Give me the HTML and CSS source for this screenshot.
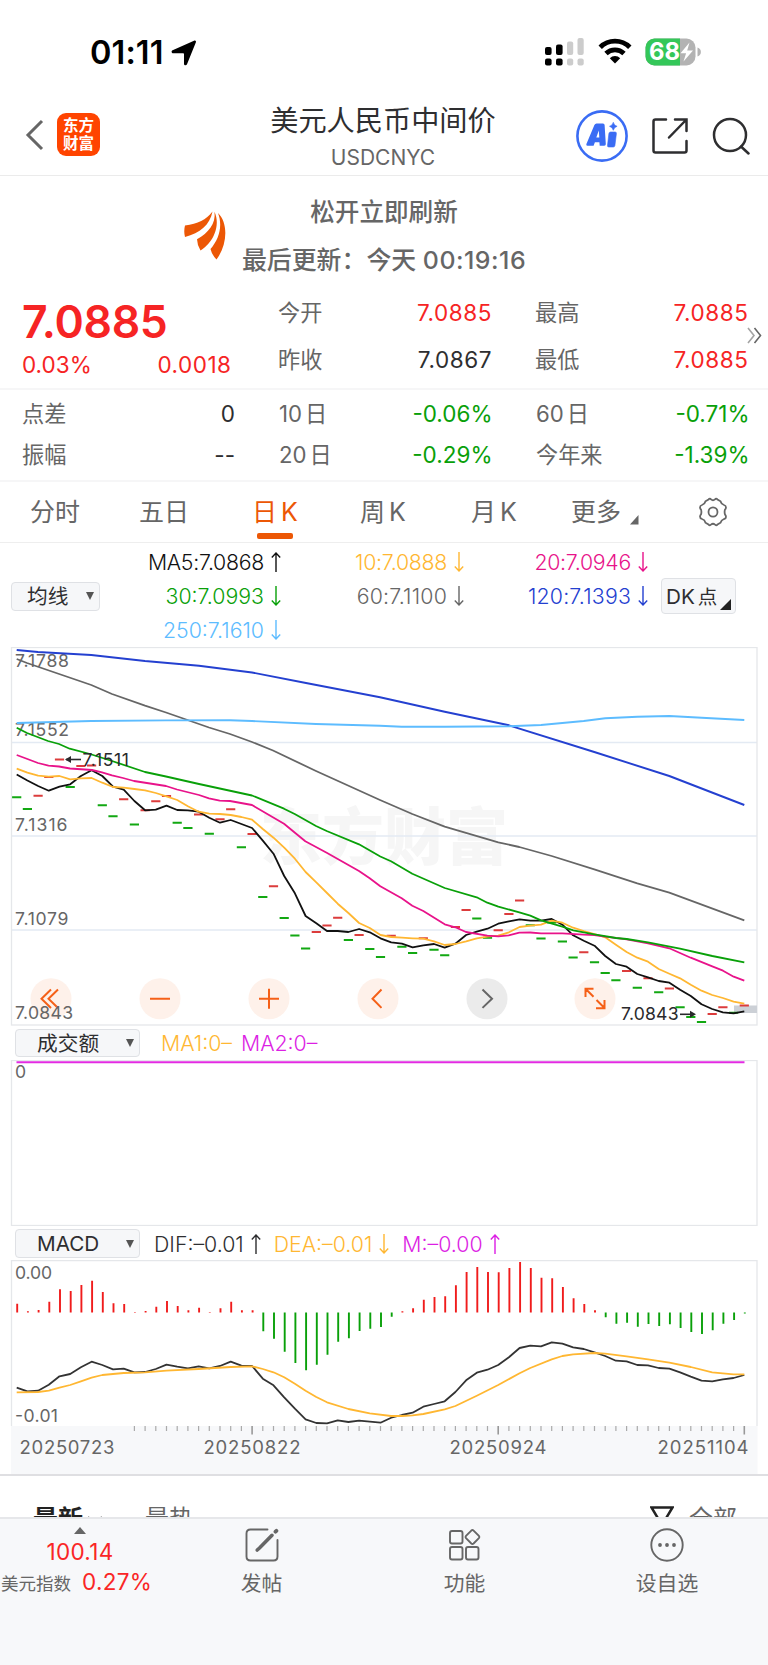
FILE: index.html
```html
<!DOCTYPE html>
<html lang="zh-CN">
<head>
<meta charset="utf-8">
<title>美元人民币中间价 USDCNYC</title>
<link rel="stylesheet" href="styles.css">
</head>
<body>
<div class="status">
  <span class="clock">01:11</span>
  <svg class="locate" width="26" height="26" viewBox="0 0 26 26"><path d="M23 .8c1.500-.6 2.400.4 1.800 1.800L16 24.300c-.7 1.600-3 1.200-3-.6V14c0-.5-.3-.8-.8-.8H2.300C.4 13.200 0 10.900 1.600 10.200z"/></svg>
  <svg class="signal" width="39" height="28" viewBox="0 0 39 28">
    <g><rect x="0" y="9" width="6.600" height="8" rx="2"/><rect x="11" y="6.500" width="6.600" height="10.500" rx="2"/><rect x="0" y="20.500" width="6.600" height="7" rx="2"/><rect x="11" y="20.500" width="6.600" height="7" rx="2"/></g>
    <g class="dim"><rect x="22" y="3.500" width="6.200" height="13.500" rx="2"/><rect x="32.500" y="0" width="6.200" height="17" rx="2"/><rect x="22" y="20.500" width="6.200" height="7" rx="2"/><rect x="32.500" y="20.500" width="6.200" height="7" rx="2"/></g>
  </svg>
  <svg class="wifi" width="34" height="26" viewBox="0 0 34 26"><path d="M2.200 9.200a21 21 0 0 1 29.600 0M8 15.400a13 13 0 0 1 18 0" fill="none" stroke="#000" stroke-width="4.800"/><path d="M17 25.500l-5.200-5.300a7.500 7.500 0 0 1 10.400 0z"/></svg>
  <svg class="battery" width="57" height="28" viewBox="0 0 57 28">
    <rect x=".5" y=".5" width="50" height="27" rx="9" fill="#b3b3b3"/>
    <path d="M9.500.5H35v27H9.500a9 9 0 0 1-9-9v-9a9 9 0 0 1 9-9z" fill="#34c759"/>
    <path d="M52.500 9.500c4.500 1 4.500 8 0 9z" fill="#b3b3b3"/>
    <path d="M44.500 4.500L35.500 15.200h5.600L38.500 23.500l9.500-11h-5.800z" fill="#fff"/>
    <text x="4" y="22.300" textLength="31" lengthAdjust="spacingAndGlyphs">68</text>
  </svg>
</div>

<header class="head">
  <div class="head-left">
    <svg class="back" width="20" height="32" viewBox="0 0 20 32"><path d="M17 2L3 16l14 14"/></svg>
    <div class="logo"><span>东方</span><span>财富</span></div>
  </div>
  <div class="titles"><h1>美元人民币中间价</h1><p>USDCNYC</p></div>
  <div class="head-right">
    <svg width="52" height="52" viewBox="0 0 52 52"><circle cx="26" cy="26" r="24.600" fill="none" stroke="#3a6cf4" stroke-width="2.600"/>
      <path fill="#3a6cf4" fill-rule="evenodd" d="M20.500 13.500h6.500q1.500 0 1.600 1.500l1.200 19q.1 1.700-1.600 1.700h-4.500l-.3-3.500h-4.500l-1.300 3.500h-6.200q-1.600 0-1-1.600l8-19q.7-1.600 2.100-1.600zM22.800 20.500L20.300 27.500h3z"/>
      <path fill="#3a6cf4" d="M34.500 22h4.600q1.500 0 1.300 1.600l-1.500 12q-.2 1.400-1.600 1.400h-4.500q-1.500 0-1.300-1.500l1.400-12q.2-1.500 1.600-1.500zM37.300 12.300q.8 3.400 3.800 4-3 .8-3.800 4-.8-3.200-3.800-4 3-.6 3.800-4z" stroke="#3a6cf4" stroke-width=".6"/></svg>
    <svg class="line" width="38" height="38" viewBox="0 0 38 38"><path d="M15 2.500H4.500q-2 0-2 2v29q0 2 2 2h29q2 0 2-2V24M24 2.500h11.500V14M35 3L18 20.500"/></svg>
    <svg class="line" width="38" height="38" viewBox="0 0 38 38"><circle cx="18" cy="18" r="16"/><path d="M29 29.500l7.500 7"/></svg>
  </div>
</header>

<section class="refresh">
  <svg width="44" height="50" viewBox="0 0 44 50"><path d="M28.500.5C22 9 14 12.500 1 14.500Q-.5 20 1 26C16 22 26 14 28.500.5z"/><path d="M30.500.8c1.500 12-6 21-17.500 27.500q.2 6 3.500 11.200C29 32 37 15 30.500.8z"/><path d="M34 2c5 13 1 26-7.500 36q1.500 6 6 10.500C43.500 34 44.500 12 34 2z"/></svg>
  <div class="refresh-text"><p>松开立即刷新</p><p class="upd">最后更新：今天 <span>00:19:16</span></p></div>
</section>

<section class="quote">
  <div class="price"><b>7.0885</b><div><span>0.03%</span><span>0.0018</span></div></div>
  <dl><dt>今开</dt><dd class="up">7.0885</dd><dt>昨收</dt><dd>7.0867</dd></dl>
  <dl><dt>最高</dt><dd class="up">7.0885</dd><dt>最低</dt><dd class="up">7.0885</dd></dl>
  <svg class="more" width="15" height="17" viewBox="0 0 15 17"><path d="M1 1l6 7.500L1 16" opacity=".6"/><path d="M7.500 1l6 7.500-6 7.500"/></svg>
</section>

<section class="stats">
  <dl><dt>点差</dt><dd>0</dd><dt>振幅</dt><dd>--</dd></dl>
  <dl><dt>10<i>日</i></dt><dd class="down">-0.06%</dd><dt>20<i>日</i></dt><dd class="down">-0.29%</dd></dl>
  <dl><dt>60<i>日</i></dt><dd class="down">-0.71%</dd><dt>今年来</dt><dd class="down">-1.39%</dd></dl>
</section>

<nav class="tabs">
  <a>分时</a><a>五日</a><a class="on">日<i>K</i></a><a>周<i>K</i></a><a>月<i>K</i></a>
  <a class="drop">更多<svg width="9" height="10" viewBox="0 0 9 10"><path d="M8.500 0v9.500H0z"/></svg></a>
  <svg class="gear" width="30" height="30" viewBox="0 0 30 30"><path d="M10.500 2.500Q12 1 13 2.400q2 1.600 4 0Q18 1 19.500 2.500l3 1.800q.7 2.900 3.500 3.700 2 .5 2 2.500-.2 1.600-1 2-.8 2.500 0 5 1 1 1 2.500 0 1.600-2 2-2.800 1-3.500 3.700l-3 1.800Q18 29 17 27.600q-2-1.600-4 0-1 1.400-2.500-.1l-3-1.800Q6.800 22.800 4 22q-2-.5-2-2.500.2-1.600 1-2 .8-2.500 0-5-1-.8-1-2Q2 8.500 4 8q2.800-.8 3.500-3.700z"/><ellipse cx="15" cy="15" rx="4.500" ry="4.700"/></svg>
</nav>

<section class="legend">
  <span class="pick ma"><em>均线</em><svg width="8" height="8" viewBox="0 0 8 8"><path d="M0 0h8L4 8z"/></svg></span>
  <div class="avgs">
    <span class="k tight">MA5:7.0868<svg class="arr" viewBox="0 0 10 20"><path d="M5 20V1M.8 5.500L5 1l4.200 4.500"/></svg></span>
    <span class="y tight">10:7.0888<svg class="arr" viewBox="0 0 10 20"><path d="M5 0v19M.8 14.500L5 19l4.200-4.500"/></svg></span>
    <span class="m tight">20:7.0946<svg class="arr" viewBox="0 0 10 20"><path d="M5 0v19M.8 14.500L5 19l4.200-4.500"/></svg></span>
    <span class="g">30:7.0993<svg class="arr" viewBox="0 0 10 20"><path d="M5 0v19M.8 14.500L5 19l4.200-4.500"/></svg></span>
    <span class="s loose">60:7.1100<svg class="arr" viewBox="0 0 10 20"><path d="M5 0v19M.8 14.500L5 19l4.200-4.500"/></svg></span>
    <span class="b loose">120:7.1393<svg class="arr" viewBox="0 0 10 20"><path d="M5 0v19M.8 14.500L5 19l4.200-4.500"/></svg></span>
    <span class="c">250:7.1610<svg class="arr" viewBox="0 0 10 20"><path d="M5 0v19M.8 14.500L5 19l4.200-4.500"/></svg></span>
  </div>
  <span class="pick dk"><em>DK<i>点</i></em><svg width="11" height="11" viewBox="0 0 11 11"><path d="M11 0v11H0z"/></svg></span>
</section>

<svg class="chart" width="768" height="379" viewBox="0 647 768 379">
  <text class="mark" x="260" y="860" textLength="248" lengthAdjust="spacingAndGlyphs">东方财富</text>
  <path class="grid" d="M11.500 742.500H757M11.500 836H757M11.500 930H757"/>
  <rect class="frame" x="11.500" y="647.500" width="745.500" height="377.500"/>
  <rect x="734" y="1005.500" width="23" height="7.500" fill="#ccd0d6"/>
  <g class="disc"><circle cx="51" cy="998.700" r="20.500"/><circle cx="160" cy="998.700" r="20.500"/><circle cx="269" cy="998.700" r="20.500"/><circle cx="378" cy="998.700" r="20.500"/><circle class="off" cx="487" cy="998.700" r="20.500"/><circle cx="595" cy="998.700" r="20.500"/></g>
  <g class="ctl"><path d="M51 989.500l-9.500 9.200L51 1008M58 989.500l-9.500 9.200L58 1008M150 998.700h20M259 998.700h20M269 988.700v20M381.500 989.500l-9 9.200 9 9.200M585.500 997v-8.200h8M586 989.300l7.500 7.500M604.500 1000v8.200h-8.500M604.500 1008l-8-8"/><path class="next" d="M482.500 989.500l9.500 9.200-9.500 9.200"/></g>
  <g class="axis">
    <text x="15" y="667" textLength="54">7.1788</text><text x="15" y="736" textLength="54">7.1552</text>
    <text x="15" y="831" textLength="52.500">7.1316</text><text x="15" y="925" textLength="53.500">7.1079</text>
    <text x="15" y="1018.700" textLength="58">7.0843</text>
  </g>
  <g id="price"></g>
  <g class="peak"><path d="M81 759.500H66"/><path class="tip" d="M65 759.500l6-3.500v7z"/><text x="82.500" y="765.700" textLength="46.500">7.1511</text>
    <path d="M680 1014.300h14"/><path class="tip" d="M696 1014.300l-6-3.500v7z"/><text x="621" y="1020" textLength="57.500">7.0843</text></g>
</svg>

<div class="bar">
  <span class="pick"><em>成交额</em><svg width="8" height="8" viewBox="0 0 8 8"><path d="M0 0h8L4 8z"/></svg></span>
  <span class="y v1">MA1:0–</span><span class="p">MA2:0–</span>
</div>
<svg class="chart" width="768" height="166" viewBox="0 1060 768 166">
  <rect class="frame" x="11.500" y="1060.500" width="745.500" height="165"/>
  <path d="M16.500 1062.300H744.500" stroke="#e32be3" stroke-width="2"/>
  <g class="axis"><text x="15" y="1077.700">0</text></g>
</svg>

<div class="bar macd">
  <span class="pick"><em>MACD</em><svg width="8" height="8" viewBox="0 0 8 8"><path d="M0 0h8L4 8z"/></svg></span>
  <span class="d">DIF:–0.01<svg class="arr" viewBox="0 0 10 20"><path d="M5 20V1M.8 5.500L5 1l4.200 4.500"/></svg></span>
  <span class="y">DEA:–0.01<svg class="arr" viewBox="0 0 10 20"><path d="M5 0v19M.8 14.500L5 19l4.200-4.500"/></svg></span>
  <span class="p">M:–0.00<svg class="arr" viewBox="0 0 10 20"><path d="M5 20V1M.8 5.500L5 1l4.200 4.500"/></svg></span>
</div>
<svg class="chart" width="768" height="214" viewBox="0 1260 768 214">
  <path class="frame" d="M11.500 1426V1260.500H757V1426"/>
  <rect x="11" y="1426" width="746.500" height="48" fill="#f7f8fa"/>
  <g class="axis"><text x="15" y="1278.500" textLength="37">0.00</text><text x="15" y="1421.500" textLength="43">-0.01</text></g>
  <g id="macd"></g>
  <g class="dates"><text x="19.500" y="1453.700" textLength="95">20250723</text><text x="203.500" y="1453.700" textLength="97">20250822</text><text x="449.500" y="1453.700" textLength="97">20250924</text><text x="657.500" y="1453.700" textLength="91">20251104</text></g>
</svg>

<div class="feed">
  <b>最新</b><svg class="chev" width="16" height="8" viewBox="0 0 16 8"><path d="M1 1l7 6 7-6"/></svg><span class="hot">最热</span>
  <svg class="filter" width="24" height="24" viewBox="0 0 24 24"><path d="M1.500 1.500h21L15 14v8l-6-3v-5z"/></svg><span>全部</span>
</div>

<footer class="foot">
  <div class="index"><svg width="12" height="7" viewBox="0 0 12 7"><path d="M0 7L6 0l6 7z"/></svg><b>100.14</b><p><span>美元指数</span><b>0.27%</b></p></div>
  <div class="act"><svg width="34" height="34" viewBox="0 0 34 34"><path d="M22.500 1.500H5.500q-4 0-4 4v23q0 4 4 4h23q4 0 4-4V12"/><path d="M27 7.300L14.500 20l-2.300 2" stroke-width="3.600"/><path d="M30.500 3.700l.9-.9" stroke-width="3.800"/></svg><span>发帖</span></div>
  <div class="act"><svg width="34" height="34" viewBox="0 0 34 34"><rect x="2" y="3" width="12.500" height="12.500" rx="2"/><rect x="2" y="19" width="12.500" height="12.500" rx="2"/><rect x="18" y="19" width="12.500" height="12.500" rx="2"/><path d="M23.300 2.600q1.200-1 2.300 0l5.300 5.300q1 1.200 0 2.300l-5.300 5.300q-1.200 1-2.300 0L18 10.200q-1-1.200 0-2.300z"/></svg><span>功能</span></div>
  <div class="act"><svg width="34" height="34" viewBox="0 0 34 34"><circle cx="17" cy="17" r="15.700"/><path d="M10 17h0M17 17h0M24 17h0" stroke-width="3.800"/></svg><span>设自选</span></div>
</footer>
<script src="chart.js"></script>
</body>
</html>
```
FILE: styles.css
```css
* { box-sizing: border-box; margin: 0; padding: 0; }
body { width: 768px; height: 1665px; overflow: hidden; background: #fff; color: #2e2e30; font-family: Inter, "Noto Sans CJK SC", sans-serif; }
i, em { font-style: normal; }
svg { display: block; flex: none; }

.status { height: 95px; display: flex; align-items: flex-start; padding: 38px 0 0 90px; }
.clock { font-weight: 600; font-size: 32.500px; line-height: 29px; width: 81px; letter-spacing: .1px; color: #000; }
.locate { margin-top: 2px; }
.signal { margin: 0 14px 0 348px; }
.signal .dim { fill: #ccc; }
.battery { margin-left: 13px; }
.battery text { font: 700 24px Inter; fill: #fff; }

.head { height: 81px; display: grid; grid-template-columns: 220px 1fr 220px; border-bottom: 1.500px solid #ebebeb; }
.head-left { display: flex; align-items: flex-start; padding: 18px 0 0 25px; }
.back { margin: 6px 12px 0 0; fill: none; stroke: #666; stroke-width: 3; }
.logo { width: 43px; height: 43px; border-radius: 9px; background: #ff4400; color: #fff; font-weight: 700; font-size: 15.500px; line-height: 17.500px; display: flex; flex-direction: column; align-items: center; padding-top: 4px; }
.titles { text-align: center; padding: 7px 2px 0 0; }
h1 { font-weight: 400; font-size: 28.200px; line-height: 38px; }
.titles p { font-size: 21px; line-height: 26px; padding-top: 5px; color: #666; }
.head-right { display: flex; align-items: center; gap: 23px; padding: 0 0 0 28px; }
.head-right svg { margin-top: 1px; }
.line { fill: none; stroke: #2e2e30; stroke-width: 2.500; stroke-linecap: round; }

.refresh { height: 114px; display: flex; padding: 20px 0 0 184px; color: #666; font-weight: 500; }
.refresh > svg { fill: #ec5705; margin-top: 15px; }
.refresh-text { width: 312px; text-align: center; font-size: 24.600px; line-height: 32px; }
.refresh-text .upd { margin-top: 16px; white-space: nowrap; font-size: 24.900px; }
.upd span { letter-spacing: .5px; }

.quote { height: 100px; display: grid; grid-template-columns: 278px 257px 213px 20px; border-bottom: 2px solid #f6f6f7; }
.price { padding: 6px 0 0 22px; color: #f62424; }
.price b { display: block; font-weight: 600; font-size: 44.500px; line-height: 52px; letter-spacing: -.3px; }
.price div { display: flex; justify-content: space-between; width: 209px; font-size: 22.500px; line-height: 30px; margin-top: 2px; }
.price div span:last-child { letter-spacing: .5px; margin-right: -.5px; }
dl { display: grid; grid-template-columns: auto 1fr; }
dt { font-size: 22.200px; color: #666; }
dt i { margin-left: 3px; }
dd { font-size: 22.500px; text-align: right; }
.quote dd { letter-spacing: .6px; margin-right: -.6px; }
.quote dl { grid-template-rows: 46.500px 46.500px; line-height: 46px; }
.quote dl:nth-child(2), .stats dl:nth-child(2) { padding-right: 43.500px; }
.up { color: #f62424; }
.down { color: #09a009; }
.more { fill: none; stroke: #666; stroke-width: 1.600; margin: 37px 0 0 -1px; }
.stats { height: 92px; display: grid; grid-template-columns: 257px 257px 213.500px; padding: 4px 0 0 22px; border-bottom: 2px solid #f6f6f7; }
.stats dl { grid-template-rows: 41px 41px; line-height: 40px; }
.stats dl:first-child { padding-right: 44px; }

.tabs { height: 61px; display: grid; grid-template-columns: 109px 113px 108px 111px 101px 152px 1fr; padding-left: 30px; border-bottom: 1px solid #eee; color: #666; font-size: 25px; line-height: 60px; }
.tabs a i { margin-left: 4px; }
.tabs .on { color: #ec5705; display: block; }
.tabs .on::after { content: ""; display: block; width: 36px; height: 5.500px; border-radius: 2px; background: #ec5705; margin: -9px 0 0 5px; }
.drop { display: flex; align-items: center; gap: 9px; margin-left: -1px; }
.drop svg { fill: #666; margin-top: 16px; }
.gear { fill: none; stroke: #666; stroke-width: 1.800; margin: 15px 0 0 -26px; }

.legend { height: 104px; display: flex; align-items: flex-start; padding-left: 11px; }
.pick { display: flex; align-items: center; justify-content: space-between; height: 28.500px; background: #f6f7f9; border: 1.500px solid #dfe1e5; border-radius: 4px; color: #2e2e30; }
.pick em { font-size: 20.700px; margin-top: -2px; }
.pick svg { fill: #555; }
.pick.ma { width: 89px; margin-top: 39px; padding: 0 5px 0 15px; }
.pick.dk { width: 75px; height: 36px; margin: 35px 0 0 13px; padding: 0 4px; position: relative; }
.dk em i { margin-left: 3px; font-size: 19.500px; }
.dk svg { position: absolute; right: 4px; bottom: 3px; fill: #222; }
.avgs { width: 548px; display: grid; grid-template-columns: 181px 183px 184px; grid-template-rows: 34px 34px 34px; padding-top: 2px; }
.avgs span, .bar > span { display: flex; justify-content: flex-end; align-items: center; font-size: 21.300px; font-weight: 300; white-space: nowrap; }
.avgs .tight { letter-spacing: -.28px; }
.avgs .loose { letter-spacing: .2px; }
.arr { width: 10px; height: 20px; margin-left: 7px; fill: none; stroke: currentColor; stroke-width: 1.400; }
.k { color: #111; } .y { color: #ffb732; } .m { color: #e8138a; } .g { color: #09a009; } .s { color: #666; } .b { color: #2440d0; } .c { color: #5dbcff; } .p { color: #dc1fe4; }

.chart .frame { fill: none; stroke: #e5e7ea; stroke-width: 1.300; }
.chart .grid { stroke: #e3eaf3; stroke-width: 1.300; }
.axis text { font: 400 17.600px Inter; fill: #666; }
.dates text { font: 400 18.500px Inter; fill: #666; }
.mark { font: 900 62px "Noto Sans CJK SC"; fill: #f6f6f6; }
.peak { fill: none; stroke: #2a2a2c; stroke-width: 1.600; }
.peak text { font: 400 17.600px Inter; fill: #2a2a2c; stroke: none; }
.peak .tip { fill: #2a2a2c; stroke: none; }
.disc { fill: #fef1ea; }
.disc .off { fill: #ebebeb; }
.ctl { fill: none; stroke: #f56018; stroke-width: 2; }
.ctl .next { stroke: #666; }

.bar { height: 34px; display: flex; align-items: center; padding-left: 15px; }
.bar .pick { width: 125px; padding: 0 5px 0 21px; justify-content: space-between; font-weight: 400; }
.bar.macd { padding-top: 1px; }
.bar.macd em { margin-top: 0; }
.bar .v1 { margin: 0 9px 0 21px; }
.d { margin-left: 14px; }
.macd .y, .macd .p { margin-left: 13px; }

.feed { height: 43px; overflow: hidden; display: flex; align-items: flex-start; border-top: 2px solid #dfdfe2; padding: 31px 0 0 33px; line-height: 24px; font-size: 24px; color: #666; }
.feed b { color: #222; font-size: 25px; font-weight: 700; }
.chev { margin: 9px 0 0 4px; fill: none; stroke: #666; stroke-width: 2; }
.hot { margin-left: 42px; width: 505px; }
.filter { fill: none; stroke: #222; stroke-width: 2.500; margin: -1px 15px 0 0; }
.foot { height: 149px; background: #f7f8fa; border-top: 2px solid #e6e7ea; display: grid; grid-template-columns: 160px 203px 203px 202px; color: #666; }
.index { padding-top: 8px; display: flex; flex-direction: column; align-items: center; }
.index svg { fill: #666; }
.index b { font-weight: 400; font-size: 22.500px; letter-spacing: .3px; line-height: 26px; color: #fa2626; margin-top: 5px; }
.index p { display: flex; align-items: center; width: 160px; padding-left: 1px; font-size: 17.500px; white-space: nowrap; margin-top: 1px; }
.index p b { margin: 0 0 0 11px; line-height: 32px; }
.act { padding-top: 9px; display: flex; flex-direction: column; align-items: center; font-size: 20.800px; line-height: 30px; }
.act svg { fill: none; stroke: #666; stroke-width: 1.900; stroke-linecap: round; margin-bottom: 7px; }
```
FILE: chart.js
```js
const STEP = 10.7, LEFT = 16.7;
const x = i => LEFT + i * STEP;
const NS = 'http://www.w3.org/2000/svg';

function draw(host, d, stroke, width) {
  const p = document.createElementNS(NS, 'path');
  p.setAttribute('d', d);
  p.setAttribute('fill', 'none');
  p.setAttribute('stroke', stroke);
  p.setAttribute('stroke-width', width);
  p.setAttribute('stroke-linejoin', 'round');
  host.appendChild(p);
}
const dense = ys => 'M' + ys.map((y, i) => x(i).toFixed(1) + ' ' + y).join('L');

const price = document.getElementById('price');
const ticks = 'g797.3 g809 r795.7 r777 r759.5 g787 r766 r765.5 g805.3 g816.3 r799.3 g824.5 r810.3 r801.3 r796 g822.7 g828 r814.5 g833.7 r819.3 r809.3 g847.3 r834 g897 r886.3 g918 g935.6 g948.6 r932 r925.4 r917.7 g940 r935 g949 g957 r935.7 g946.7 g953 r938.3 g949.8 g955.3 r927 r910 g918.6 g937.7 r930.3 r914 r900.6 g925.3 g938.6 g922.5 g941.6 g957.6 r952.3 g962.3 g973 g980.3 r971 g987.7 r978.3 g992.3 r988.6 g1007.3 g1017 g1022 r1014 r1007.3 g1012.7 r1005.6'.split(' ');
for (const [key, color] of [['g', '#12a812'], ['r', '#dc3c3c']]) {
  draw(price, ticks.map((t, i) => t[0] === key ? `M${(x(i) - 4.6).toFixed(1)} ${t.slice(1)}h9.200` : '').join(''), color, 2);
}

draw(price, dense([774.5,780.5,786,790.7,786.7,784.3,776,770.3,776,786.7,789.7,801,810.3,809.7,805.7,810,810.3,811.7,817.7,822.7,820,824,828,840.7,853.7,876,893.3,916,923.3,931,931,932,929,932.3,938.3,942.3,943.7,947.3,945.3,944,947.7,943.7,935,931.7,928.7,923.7,921.3,919.3,920.7,920.7,919,924.7,935.3,940.7,945.7,956,964,966.7,974,977.3,981,982.7,989.7,996,1004.3,1009,1012.3,1013.3,1011.3]), '#111', 1.8);
draw(price, dense([768.7,772.7,775.7,776.7,776,779.3,778.3,778,782.7,787,787.7,789,790.3,793,796.3,800,806.3,811.7,813.7,814,815,817,819.7,829,837.7,847.7,858.7,872,882.3,893,903.7,913,923,928,935,937,937.7,938.3,938.7,941.3,945,944,941.3,938.3,936.7,935.7,932.3,927,925.7,924.7,920.7,922.7,927.7,931,934,937.3,944.7,952,957.7,961.7,969,973.7,978.3,984.7,990.7,995,998,1001.7,1003.7]), '#ffb732', 1.8);
draw(price, 'M16.700 755L27.400 759 38 763 48.500 765.700 59 766.500 70 768.500 92 770 102 772.300 112 775.300 123 778 134 781 166 786 177 789.500 199 795 209 798.300 219.700 800.700 230 801 252 805 284 823.700 305.300 841.300 326.700 852.700 359 871 369.700 878.300 380.300 886.300 401.700 898.300 412.300 905.700 423.300 911 444.700 924.300 455.300 927.300 466 932 487.300 935.700 498.300 936.300 508.700 935.300 519.300 932.700 530.300 932.500 541 933.300 562.300 933.300 583.700 934.700 594.300 935 605.300 936.700 626.700 939.300 648 943.300 669.300 948.300 690.700 957.700 712.300 966.300 723 970.700 733.700 976.700 744.300 980.700', '#e8138a', 1.8);
draw(price, 'M16.700 727.700L27 733 48 741 59 744 69.700 748.700 90 754 112 761 145 772 166 776.500 199 784 252 795.500 284 808.700 294.700 814 316 826 326.700 831 359 844.300 380.300 856.500 391 861.300 412.300 873.700 444.700 888 476.700 897.300 487.300 902.700 498.300 906.700 519.300 912.300 530.300 915.700 541 920.300 562.300 926.700 573.300 930.300 594.300 934.300 616 938 626.700 939 648 942.300 680 948.700 712.300 956 744.300 962.300', '#09a009', 1.8);
draw(price, 'M16.700 659L27 663 91.300 685 112 694 145 705.700 166 712.500 209 727.500 230 734 252 742 273 750.500 316 771 380 800 412.300 814 444.700 826.700 498.300 842.300 519.300 847 551.700 856 594.300 869.300 637.300 883.300 669.300 892.700 744.300 920.300', '#666', 1.8);
draw(price, 'M16.700 650L38 652 91.300 655 145 661 199 665.800 252 672.500 306 683 380 697.300 444.700 711.700 509 725.300 594.300 752 669.300 776 744.300 805', '#2440d0', 1.9);
draw(price, 'M16.700 723L91.300 721 166 720.400 230 720.300 252 721 316 724 380 725.700 401.700 726.700 444.700 726.700 509 726.300 541 725 562.300 723 583.700 721 605.300 718.300 637.300 716.700 669.300 716 701.700 717.700 744.300 720', '#5dbcff', 1.9);

const macd = document.getElementById('macd');
const ZERO = 1312.4;
const ends = [1303.7,1311.3,1310,1301.7,1289.3,1291,1285,1280.7,1292,1303.3,1304,1311.9,1311,1306.7,1301,1306,1310.3,1307.7,1311.9,1308.3,1301.7,1310.3,1310.3,1331.3,1338.7,1351.7,1363,1370.3,1364.7,1354.7,1341.7,1338.3,1331,1328.7,1327,1316.7,1311.3,1308.3,1299.7,1297,1296.3,1285.3,1272,1267,1272,1272.3,1268,1262,1268,1277.7,1278.3,1287,1298.3,1304,1310.3,1317.3,1323.7,1322.7,1326.7,1324,1326,1324.3,1328,1332,1334,1330.3,1323.7,1320,1313.5];
const stem = test => ends.map((y, i) => test(y) ? `M${(x(i) + .5).toFixed(1)} ${ZERO}V${y}` : '').join('');
draw(macd, stem(y => y < ZERO), '#f01c1c', 1.9);
draw(macd, stem(y => y > ZERO), '#09a009', 1.9);
draw(macd, dense([1387.7,1391.3,1390.7,1384.7,1376.3,1374,1367.3,1361.7,1365,1369.3,1368.7,1372.3,1372,1369,1364.7,1366.7,1368.3,1366.3,1368.3,1366,1361.7,1365.7,1366,1378.7,1385.3,1397.3,1408.7,1419.3,1423,1423.3,1420.3,1422,1420.7,1421.7,1422.7,1417.7,1415,1412.7,1406.7,1404,1401.3,1392,1380.3,1372.7,1369.7,1365,1357.3,1348,1345.7,1346.3,1342.3,1343.7,1347.3,1349,1352.3,1356,1360.7,1361.3,1365,1365.3,1368,1368.7,1372.3,1376.7,1380.7,1381.3,1379.3,1378,1375]), '#333', 1.8);
const dea = [[0,1392.3],[2,1392],[3,1390.7],[4,1387.7],[5,1385],[6,1381.3],[7,1377.7],[8,1375],[10,1373],[12,1372.3],[14,1370.7],[17,1369],[20,1367],[22,1366.3],[23,1369],[24,1372.3],[25,1377.3],[26,1383.7],[27,1390.7],[28,1397],[29,1402.3],[31,1409],[33,1413.3],[35,1416],[36,1416],[37,1415.3],[38,1414],[40,1409.3],[41,1406],[43,1395.7],[45,1385],[47,1373.3],[48,1368],[50,1359.3],[51,1356],[52,1354.3],[54,1353],[55,1353.7],[57,1356.3],[59,1359.3],[61,1362.7],[63,1367],[65,1372.3],[67,1374.3],[68,1374.3]];
draw(macd, 'M' + dea.map(([i, y]) => x(i).toFixed(1) + ' ' + y).join('L'), '#ffb732', 1.8);

let minor = '', major = '';
for (let i = 11; i < 69; i++) {
  if (i === 22 || i === 45 || i === 68) major += `M${x(i).toFixed(1)} 1426v8.500`;
  else minor += `M${x(i).toFixed(1)} 1426v5`;
}
draw(macd, minor, '#aaa', 1.2);
draw(macd, major, '#999', 1.6);
```
